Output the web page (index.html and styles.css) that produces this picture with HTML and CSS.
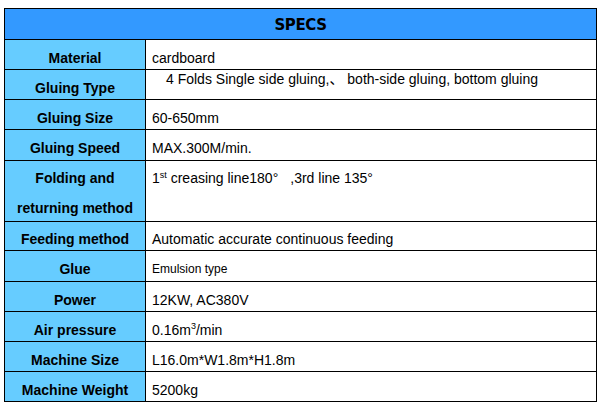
FILE: index.html
```html
<!DOCTYPE html>
<html>
<head>
<meta charset="utf-8">
<link rel="stylesheet" href="styles.css">
</head>
<body>
<div class="specs">
  <div class="head">SPECS</div>

  <div class="label">Material</div>
  <div class="value">cardboard</div>

  <div class="label">Gluing Type</div>
  <div class="value top indent"><span>4 Folds Single side gluing,<span class="cjk">、</span> both-side gluing, bottom gluing</span></div>

  <div class="label">Gluing Size</div>
  <div class="value">60-650mm</div>

  <div class="label">Gluing Speed</div>
  <div class="value">MAX.300M/min.</div>

  <div class="label two">Folding and<br>returning method</div>
  <div class="value two">1<sup>st</sup> creasing line180°<span class="gap"></span>,3rd line 135°</div>

  <div class="label">Feeding method</div>
  <div class="value">Automatic accurate continuous feeding</div>

  <div class="label">Glue</div>
  <div class="value small">Emulsion type</div>

  <div class="label">Power</div>
  <div class="value">12KW, AC380V</div>

  <div class="label">Air pressure</div>
  <div class="value"><span>0.16m<sup class="hi">3</sup>/min</span></div>

  <div class="label">Machine Size</div>
  <div class="value">L16.0m*W1.8m*H1.8m</div>

  <div class="label">Machine Weight</div>
  <div class="value">5200kg</div>
</div>
</body>
</html>
```
FILE: styles.css
```css
html, body {
  margin: 0;
  padding: 0;
  background: #ffffff;
}

body {
  font-family: "Liberation Sans", Arial, sans-serif;
  color: #000;
}

.specs {
  margin: 8px 0 0 4px;
  width: 593px;
  box-sizing: border-box;
  display: grid;
  grid-template-columns: 140px 450px;
  grid-template-rows: 30px 29px 29px 29px 30px 60px 28px 30px 29px 29px 29px 29px;
  gap: 1px;
  padding: 1px;
  background: #000;
}

.head {
  grid-column: 1 / 3;
  background: #3399ff;
  display: flex;
  align-items: center;
  justify-content: center;
  font-family: "DejaVu Sans", Verdana, sans-serif;
  font-weight: bold;
  font-size: 15px;
  letter-spacing: -0.4px;
  padding-top: 1px;
}

.label {
  background: #66ccff;
  font-weight: bold;
  font-size: 14px;
  line-height: 16px;
  display: flex;
  align-items: center;
  justify-content: center;
  text-align: center;
  padding-top: 6px;
  box-sizing: border-box;
}

.value {
  background: #fff;
  font-size: 14px;
  line-height: 16px;
  display: flex;
  align-items: center;
  padding: 6px 0 0 6px;
  box-sizing: border-box;
  white-space: nowrap;
}

.value.top {
  align-items: flex-start;
  padding-top: 0;
}

.value.indent {
  padding-left: 20px;
}

.label.two,
.value.two {
  align-items: flex-start;
  line-height: 30px;
  padding-top: 2px;
}

.value.two {
  display: block;
}

.value.small {
  font-size: 12px;
}

.cjk {
  font-family: "Noto Sans CJK SC", sans-serif;
}

.gap {
  display: inline-block;
  width: 12px;
}

sup {
  font-size: 9px;
  line-height: 0;
  vertical-align: 5px;
}

sup.hi {
  vertical-align: 6px;
}
```
